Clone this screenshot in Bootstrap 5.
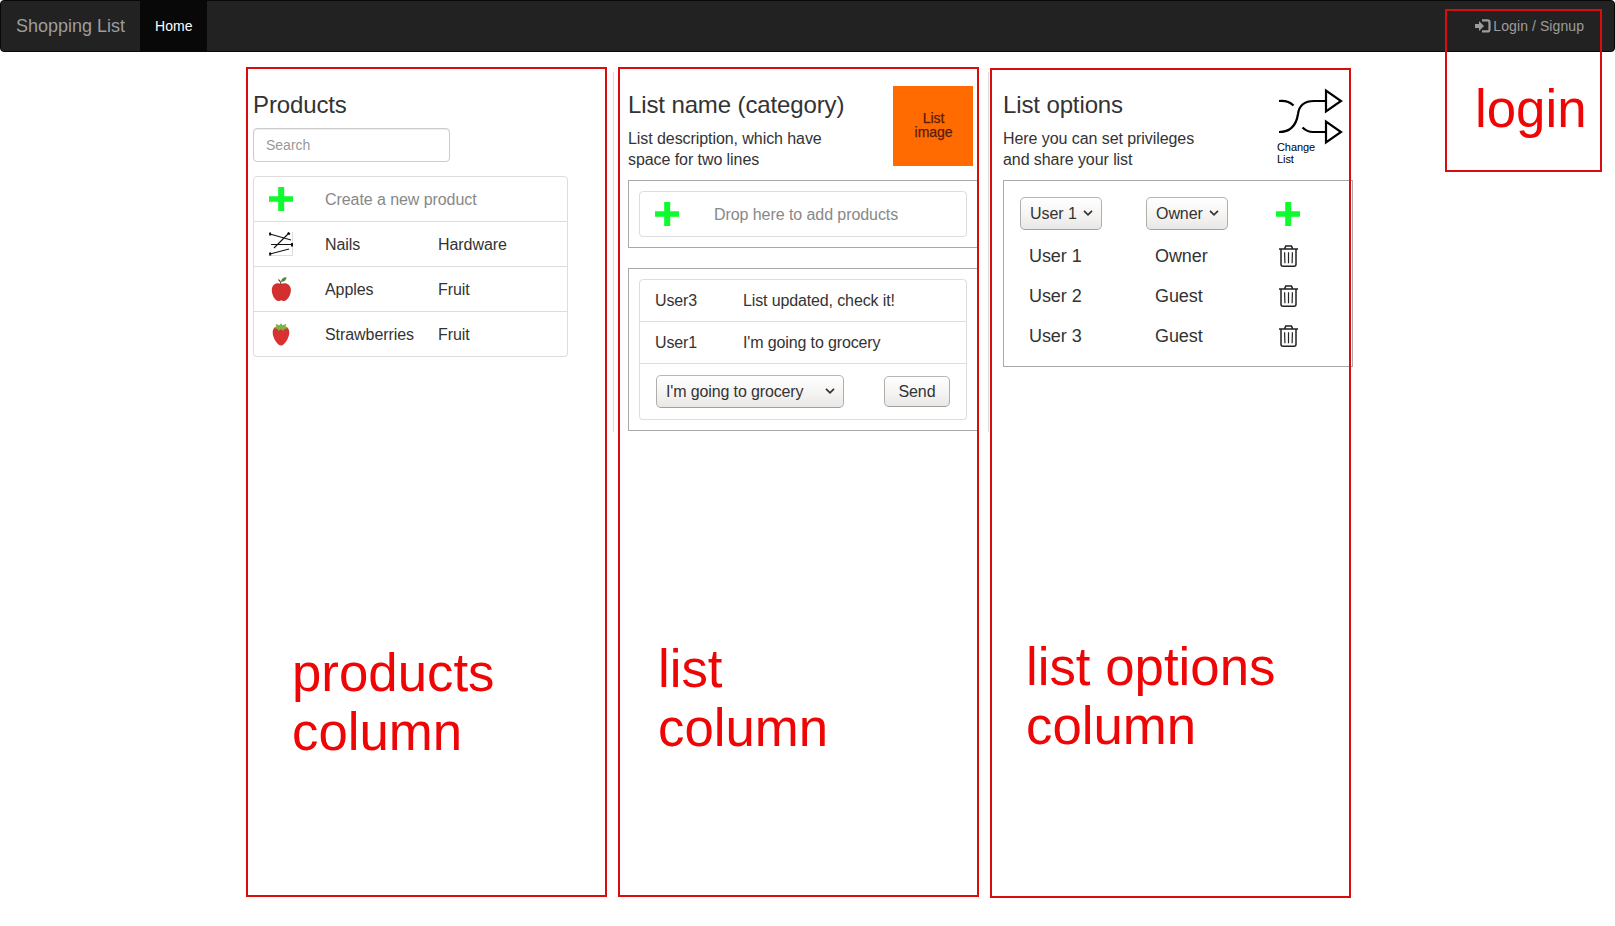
<!DOCTYPE html>
<html lang="en">
<head>
<meta charset="utf-8">
<title>Shopping List</title>
<meta name="viewport" content="width=device-width, initial-scale=1">
<link href="https://cdn.jsdelivr.net/npm/bootstrap@5.3.0/dist/css/bootstrap.min.css" rel="stylesheet">
<style>
body{font-family:"Liberation Sans",Arial,sans-serif;font-size:16px;line-height:21px;color:#333;background:#fff;height:926px;overflow:hidden}
.topbar{height:52px;background:#222;border:1px solid #080808;border-radius:4px;padding:0;margin-bottom:20px}
.topbar .navbar-brand{font-size:18px;line-height:20px;color:#9d9d9d;padding:15px;margin:0}
.topbar .nav-link{font-size:14px;line-height:20px;color:#9d9d9d;padding:15px!important}
.topbar .nav-link.active{color:#fff;background:#080808}
.topbar .nav-link.login-link{margin-right:15px;letter-spacing:.08px}
.board{width:1125px;margin-left:238px;letter-spacing:-.07px}
.board-col{width:375px;height:360px;padding-left:15px}
.board-col+.board-col{border-left:1px solid #ddd;padding-left:14px}
h3{font-size:24px;line-height:26px;font-weight:400;margin:20px 0 10px;letter-spacing:-.12px}
.col-head{height:108px}
.search{width:197px;height:34px;font-size:14px;padding:6px 12px;border:1px solid #ccc;border-radius:4px;box-shadow:inset 0 1px 1px rgba(0,0,0,.075)}
.search::placeholder{color:#999}
.rows{--bs-list-group-border-color:#ddd;--bs-list-group-border-radius:4px;--bs-list-group-color:#333}
.rows .list-group-item{padding:0 16px 0 15px;display:flex;align-items:center}
.goods{width:315px;margin-top:14px}
.goods .list-group-item{height:45px}
.goods .list-group-item:first-child{height:46px}
.pic{width:24px;height:24px;flex:none;display:block}
.c-name{width:113px;margin-left:32px}
.hint{color:#888}
.thumb{width:80px;height:80px;background:#ff6b00;color:#5a1c0c;font-size:14px;line-height:14px;margin:14px 15px 0 0;padding:0 0 2px 1px;-webkit-text-stroke:.25px #5a1c0c}
.panel-box{border:1px solid #aaa;padding:10px;width:350px}
.drop .list-group-item{height:46px}
.chat{letter-spacing:-.13px}
.chat .list-group-item{height:42px}
.chat .list-group-item:first-child{height:43px}
.chat .list-group-item:last-child{height:56px;padding-left:16px}
.chat-user{width:88px}
.ctl{border:1px solid #aaa;border-color:#b8b5b2 #b0adaa #a19e9b;border-radius:5px;background:linear-gradient(#fff,#f6f5f4 50%,#e9e8e7);color:#333;font:inherit;letter-spacing:inherit;height:33px;display:flex;align-items:center;justify-content:space-between;padding:0 8px 1px 9px}
.ctl-wide{width:188px}
.ctl-user{width:82px}
.ctl-send{width:66px;height:31px;justify-content:center;padding:0 0 1px}
.options{height:187px;padding:16px 0 0 16px}
.options .slot{width:126px;flex:none}
.person{font-size:18px;height:40px}
.person .slot:first-child{padding-left:9px;width:135px}
.person .slot+.slot{width:114px}
.switch{width:68px;margin:14px 18px 0 0}
.switch span{display:block;font-size:11px;line-height:12px;color:#000}
/* red callouts lie over the page */
.callout{position:absolute;border:2px solid #d80d0d;pointer-events:none}
.callout p{position:absolute;margin:0;font-size:52.8px;line-height:59px;color:#ee0505;white-space:pre}
</style>
</head>
<body>
<svg class="d-none">
  <symbol id="plus" viewBox="0 0 24 24"><path d="M9.2 0h6v9.2H24v5.6h-8.8V24h-6v-9.2H0V9.200h9.200z" fill="#0ffb30"/></symbol>
  <symbol id="chev" viewBox="0 0 10 6"><path d="M1 .8l4 4 4-4" fill="none" stroke="#333" stroke-width="1.7"/></symbol>
  <symbol id="bin" viewBox="0 0 19 22"><g fill="none" stroke="#222"><path d="M0 4h19M5.500 4l1.200-2.900h5.800L13.700 4" stroke-width="1.500"/><path d="M2 4v15.200q0 2 2 2h11q2 0 2-2V4" stroke-width="1.500"/><path d="M5.600 7.200l.3 11M9.500 7.200v11M13.400 7.200l-.3 11" stroke-width="1.200"/></g></symbol>
</svg>

<nav class="navbar topbar d-flex flex-nowrap align-items-stretch justify-content-start">
  <a class="navbar-brand" href="#">Shopping List</a>
  <a class="nav-link active" href="#">Home</a>
  <a class="nav-link login-link ms-auto d-flex" href="#"><svg width="16" height="14" viewBox="0 0 16 14" style="margin:3px 2px 0 0"><path d="M0 5h4V2l5 5-5 5V9H0z" fill="#9d9d9d"/><path d="M7 1.400h5.500q2 0 2 2v7q0 2-2 2H7" fill="none" stroke="#9d9d9d" stroke-width="2.200"/></svg>Login / Signup</a>
</nav>

<main class="board d-flex">
  <section class="board-col">
    <h3>Products</h3>
    <input class="form-control search" placeholder="Search">
    <ul class="list-group rows goods">
      <li class="list-group-item"><svg class="pic"><use href="#plus"/></svg><span class="hint ms-4 ps-2">Create a new product</span></li>
      <li class="list-group-item"><svg class="pic" viewBox="0 0 24 24"><path d="M0 23.500h23.500V0" fill="none" stroke="#ddd"/><path d="M1 2l21 6M20 1L5 16M2 12.500h21M1 22l19-5" stroke="#111" stroke-width="1.100" fill="none"/><path d="M.8.500l.6 3M18.800.5l2 2M23 11v3.500M.8 20.500l.6 3" stroke="#111" stroke-width="2"/></svg><span class="c-name">Nails</span>Hardware</li>
      <li class="list-group-item"><svg class="pic" viewBox="0 0 24 24"><path d="M12 7C8 4.800 2.800 7 2.800 13c0 5 3.200 11 6.700 11 1.200 0 1.700-.5 2.700-.5s1.500.5 2.700.5c3.400 0 7-6 7-11 0-6-5.600-8.200-9.900-6z" fill="#d32f2f"/><path d="M12.200 7.600Q12 4.500 9.500 2.500" fill="none" stroke="#5d4037" stroke-width="1.100"/><path d="M12 5Q12 .5 17.500 0 17.300 4.800 12 5z" fill="#558b2f"/></svg><span class="c-name">Apples</span>Fruit</li>
      <li class="list-group-item"><svg class="pic" viewBox="0 0 24 24"><path d="M12 5.500c5.500-2 8.300.7 8.300 5C20.300 16 15.500 23.500 12 23.500S3.700 16 3.700 10.500c0-4.300 2.800-7 8.300-5z" fill="#d93030"/><path d="M12 1l1.400 2.200L17.500 2l-1 2.300 2.700 1.800-3.800.8-.8 2-2.600-1.600-2.600 1.600-.8-2-3.800-.8 2.700-1.800-1-2.300 4.300 1.200z" fill="#7cb342"/></svg><span class="c-name">Strawberries</span>Fruit</li>
    </ul>
  </section>

  <section class="board-col">
    <div class="col-head d-flex justify-content-between align-items-start">
      <div><h3>List name (category)</h3>List description, which have<br>space for two lines</div>
      <div class="thumb d-flex align-items-center justify-content-center text-center">List<br>image</div>
    </div>
    <div class="panel-box drop">
      <ul class="list-group rows"><li class="list-group-item"><svg class="pic"><use href="#plus"/></svg><span class="hint" style="margin-left:35px">Drop here to add products</span></li></ul>
    </div>
    <div class="panel-box chat" style="margin-top:20px">
      <ul class="list-group rows">
        <li class="list-group-item"><span class="chat-user">User3</span>List updated, check it!</li>
        <li class="list-group-item"><span class="chat-user">User1</span>I'm going to grocery</li>
        <li class="list-group-item justify-content-between"><button class="ctl ctl-wide">I'm going to grocery<svg width="10" height="6"><use href="#chev"/></svg></button><button class="ctl ctl-send">Send</button></li>
      </ul>
    </div>
  </section>

  <section class="board-col">
    <div class="col-head d-flex justify-content-between align-items-start">
      <div><h3>List options</h3>Here you can set privileges<br>and share your list</div>
      <div class="switch">
        <svg class="d-block" width="68" height="55" viewBox="1 0 68 55" overflow="visible"><g fill="none" stroke="#000" stroke-width="2.200"><path d="M3 15q9-1 14.500 4.500M3 46c10 0 17-5 19-18C23 20 28 15 38 15h11M26.500 41.500Q31 46 37 46h12"/><path d="M50 4.500v21L65 15zM50 35.500v21L65 46z"/></g></svg>
        <span>Change</span><span>List</span>
      </div>
    </div>
    <div class="panel-box options">
      <div class="d-flex align-items-center">
        <div class="slot"><button class="ctl ctl-user">User 1<svg width="10" height="6"><use href="#chev"/></svg></button></div>
        <div class="slot"><button class="ctl ctl-user">Owner<svg width="10" height="6"><use href="#chev"/></svg></button></div>
        <svg class="pic" style="margin-left:4px"><use href="#plus"/></svg>
      </div>
      <div class="person d-flex align-items-center" style="margin-top:6px"><span class="slot">User 1</span><span class="slot">Owner</span><svg width="19" height="22" style="margin-left:10px"><use href="#bin"/></svg></div>
      <div class="person d-flex align-items-center"><span class="slot">User 2</span><span class="slot">Guest</span><svg width="19" height="22" style="margin-left:10px"><use href="#bin"/></svg></div>
      <div class="person d-flex align-items-center"><span class="slot">User 3</span><span class="slot">Guest</span><svg width="19" height="22" style="margin-left:10px"><use href="#bin"/></svg></div>
    </div>
  </section>
</main>

<div class="callout" style="left:246px;top:67px;width:361px;height:830px"><p style="left:44px;top:574px">products
column</p></div>
<div class="callout" style="left:618px;top:67px;width:361px;height:830px"><p style="left:38px;top:570px">list
column</p></div>
<div class="callout" style="left:990px;top:68px;width:361px;height:830px"><p style="left:34px;top:567px">list options
column</p></div>
<div class="callout" style="left:1445px;top:9px;width:157px;height:163px"><p style="left:28px;top:68px">login</p></div>
<script src="https://cdn.jsdelivr.net/npm/bootstrap@5.3.0/dist/js/bootstrap.bundle.min.js"></script>
</body>
</html>
